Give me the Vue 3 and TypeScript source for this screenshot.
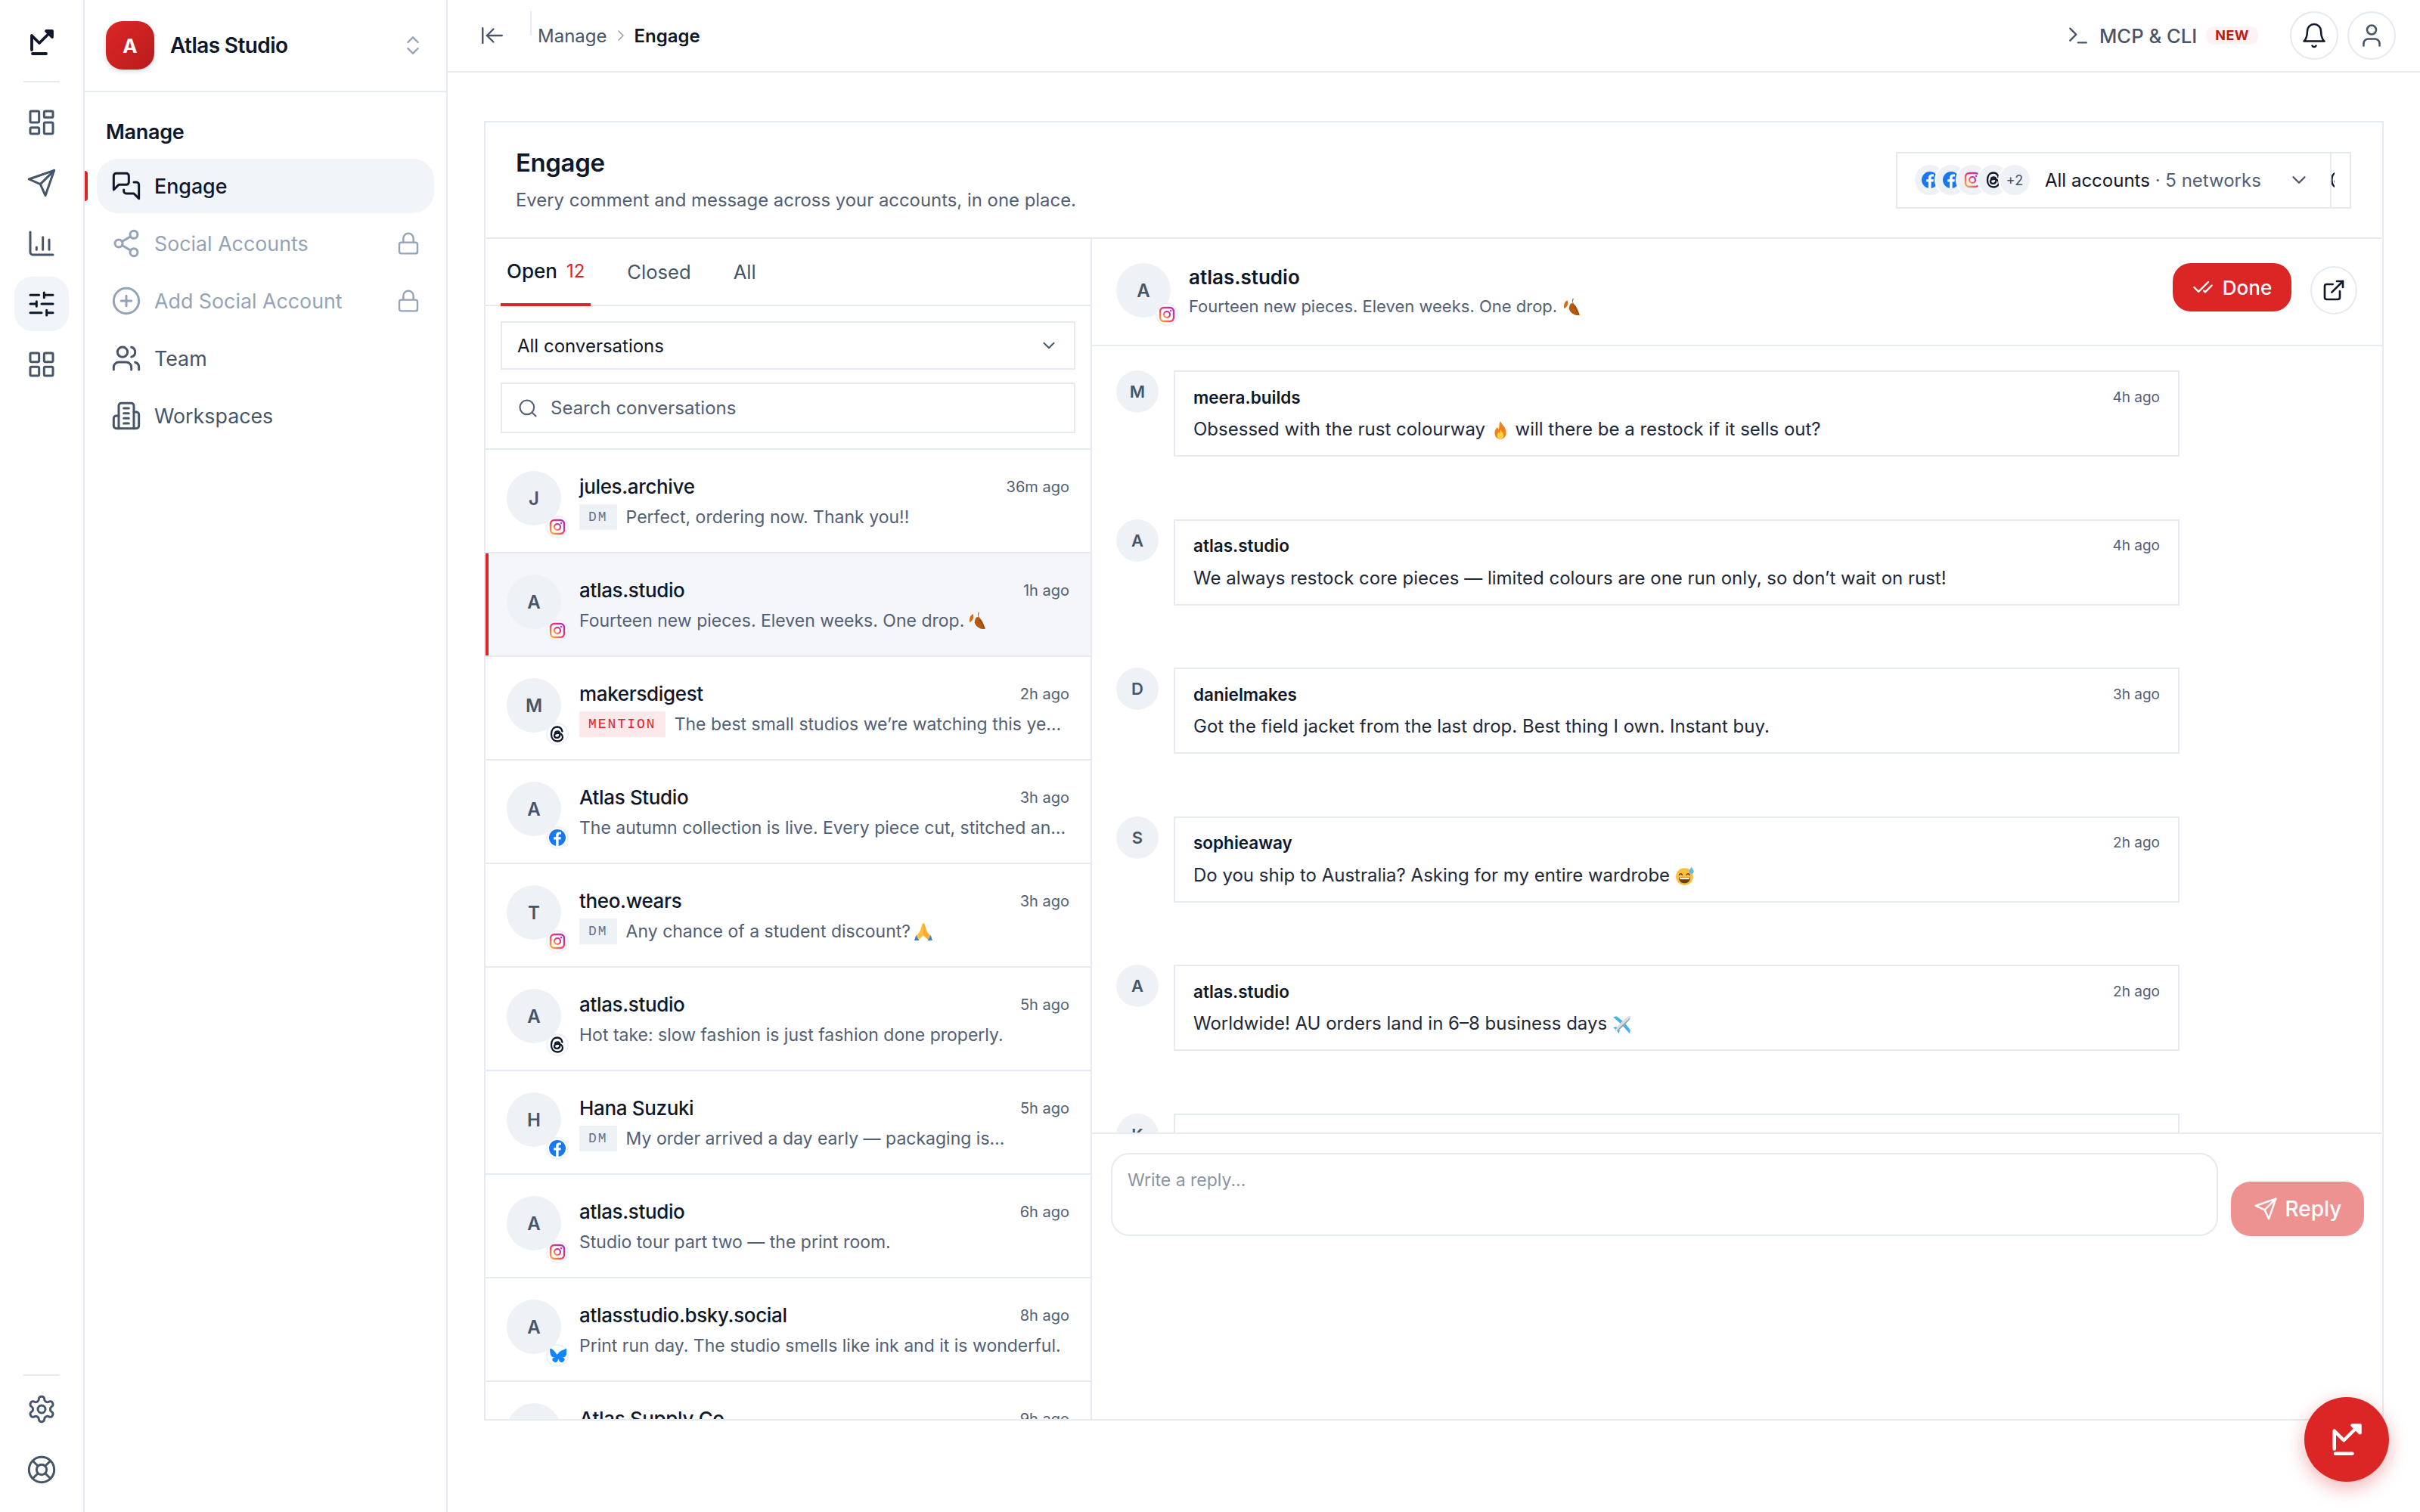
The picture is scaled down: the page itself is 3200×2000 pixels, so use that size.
<script setup lang="ts">
type Row = { initial: string; net: string; name: string; time: string; tag?: string; text: string; emoji?: string; active?: boolean }
type Msg = { initial: string; name: string; time: string; before: string; emoji?: string; after?: string }

const icons: Record<string, string> = {
  logo: '<path d="M7 11v19M7 11l10 10L32 6"/><path d="M26 5h8v8z" fill="currentColor"/><path d="M8 35h18"/>',
  dashboard: '<rect x="3" y="3" width="7" height="9" rx="1"/><rect x="14" y="3" width="7" height="5" rx="1"/><rect x="14" y="12" width="7" height="9" rx="1"/><rect x="3" y="16" width="7" height="5" rx="1"/>',
  send: '<path d="M22 2 11 13"/><path d="m22 2-7 20-4-9-9-4z"/>',
  chart: '<path d="M3 3v16a2 2 0 0 0 2 2h16"/><path d="M8 17v-2"/><path d="M13 17V7"/><path d="M18 17v-8"/>',
  sliders: '<path d="M21 5h-7M10 5H3M21 12h-9M8 12H3M21 19h-5M12 19H3M14 3v4M8 10v4M16 17v4"/>',
  grid: '<rect x="3" y="3" width="7" height="7" rx="1"/><rect x="14" y="3" width="7" height="7" rx="1"/><rect x="14" y="14" width="7" height="7" rx="1"/><rect x="3" y="14" width="7" height="7" rx="1"/>',
  gear: '<path d="M12.22 2h-.44a2 2 0 0 0-2 2v.18a2 2 0 0 1-1 1.73l-.43.25a2 2 0 0 1-2 0l-.15-.08a2 2 0 0 0-2.73.73l-.22.38a2 2 0 0 0 .73 2.73l.15.1a2 2 0 0 1 1 1.72v.51a2 2 0 0 1-1 1.74l-.15.09a2 2 0 0 0-.73 2.73l.22.38a2 2 0 0 0 2.73.73l.15-.08a2 2 0 0 1 2 0l.43.25a2 2 0 0 1 1 1.73V20a2 2 0 0 0 2 2h.44a2 2 0 0 0 2-2v-.18a2 2 0 0 1 1-1.73l.43-.25a2 2 0 0 1 2 0l.15.08a2 2 0 0 0 2.73-.73l.22-.39a2 2 0 0 0-.73-2.73l-.15-.08a2 2 0 0 1-1-1.74v-.5a2 2 0 0 1 1-1.74l.15-.09a2 2 0 0 0 .73-2.73l-.22-.38a2 2 0 0 0-2.73-.73l-.15.08a2 2 0 0 1-2 0l-.43-.25a2 2 0 0 1-1-1.73V4a2 2 0 0 0-2-2z"/><circle cx="12" cy="12" r="3"/>',
  help: '<circle cx="12" cy="12" r="10"/><circle cx="12" cy="12" r="4"/><path d="m4.93 4.93 4.24 4.24M14.83 9.17l4.24-4.24M14.83 14.83l4.24 4.24M9.17 14.83l-4.24 4.24"/>',
  updown: '<path d="m7 15 5 5 5-5"/><path d="m7 9 5-5 5 5"/>',
  messages: '<path d="M14 9a2 2 0 0 1-2 2H6l-4 4V4a2 2 0 0 1 2-2h8a2 2 0 0 1 2 2z"/><path d="M18 9h2a2 2 0 0 1 2 2v11l-4-4h-6a2 2 0 0 1-2-2v-1"/>',
  share: '<circle cx="18" cy="5" r="3"/><circle cx="6" cy="12" r="3"/><circle cx="18" cy="19" r="3"/><path d="m8.59 13.51 6.83 3.98M15.41 6.51l-6.82 3.98"/>',
  plus: '<circle cx="12" cy="12" r="10"/><path d="M8 12h8M12 8v8"/>',
  lock: '<rect x="3" y="11" width="18" height="11" rx="2"/><path d="M7 11V7a5 5 0 0 1 10 0v4"/>',
  users: '<path d="M16 21v-2a4 4 0 0 0-4-4H6a4 4 0 0 0-4 4v2"/><circle cx="9" cy="7" r="4"/><path d="M22 21v-2a4 4 0 0 0-3-3.87"/><path d="M16 3.13a4 4 0 0 1 0 7.75"/>',
  building: '<path d="M6 22V4a2 2 0 0 1 2-2h8a2 2 0 0 1 2 2v18Z"/><path d="M6 12H4a2 2 0 0 0-2 2v6a2 2 0 0 0 2 2h2"/><path d="M18 9h2a2 2 0 0 1 2 2v9a2 2 0 0 1-2 2h-2"/><path d="M10 6h4M10 10h4M10 14h4M10 18h4"/>',
  collapse: '<path d="M3 19V5"/><path d="m13 6-6 6 6 6"/><path d="M7 12h14"/>',
  right: '<path d="m9 18 6-6-6-6"/>',
  down: '<path d="m6 9 6 6 6-6"/>',
  terminal: '<path d="m4 17 6-6-6-6"/><path d="M12 19h8"/>',
  bell: '<path d="M6 8a6 6 0 0 1 12 0c0 7 3 9 3 9H3s3-2 3-9"/><path d="M10.3 21a1.94 1.94 0 0 0 3.4 0"/>',
  user: '<path d="M19 21v-2a4 4 0 0 0-4-4H9a4 4 0 0 0-4 4v2"/><circle cx="12" cy="7" r="4"/>',
  search: '<circle cx="11" cy="11" r="8"/><path d="m21 21-4.3-4.3"/>',
  checks: '<path d="M18 6 7 17l-5-5"/><path d="m22 10-7.5 7.5L13 16"/>',
  external: '<path d="M15 3h6v6"/><path d="M10 14 21 3"/><path d="M18 13v6a2 2 0 0 1-2 2H5a2 2 0 0 1-2-2V8a2 2 0 0 1 2-2h6"/>'
}

const socials: Record<string, string> = {
  instagram: '<defs><linearGradient id="ig" x1="0" y1="1" x2="1" y2="0"><stop offset="0" stop-color="#fdb03c"/><stop offset=".5" stop-color="#f0396b"/><stop offset="1" stop-color="#a62fc9"/></linearGradient></defs><rect x="3" y="3" width="18" height="18" rx="5" fill="none" stroke="url(#ig)" stroke-width="2.4"/><circle cx="12" cy="12" r="4" fill="none" stroke="url(#ig)" stroke-width="2.2"/><circle cx="17" cy="7" r="1.2" fill="#c936a8" stroke="none"/>',
  facebook: '<circle cx="12" cy="12" r="11" fill="#1877f2" stroke="none"/><path d="M13.6 23v-8.4h2.8l.5-3.3h-3.3V9.2c0-1 .4-1.7 1.8-1.7H17V4.6c-.5 0-1.5-.2-2.6-.2-2.6 0-4.3 1.6-4.3 4.4v2.5H7.2v3.3h2.900V23z" fill="#fff" stroke="none"/>',
  threads: '<path d="M18.5 8.5C17.7 4.8 15.3 2.500 12 2.500 7 2.500 4 6.300 4 12s3 9.500 8 9.500c4 0 7-2.400 7-5.600 0-3.200-2.800-5.100-6.500-5.100-2.700 0-4.500 1.300-4.500 3.200 0 1.800 1.500 2.900 3.500 2.900 2.500 0 3.900-1.700 3.900-4.600 0-2.400-1.300-3.900-3.400-3.900-1.300 0-2.300.5-3 1.500" fill="none" stroke="#0f172a" stroke-width="2.300"/>',
  bluesky: '<path d="M12 11c-1-2-3.800-5.700-6.400-7.500C3.100 1.700 2 2 2 4.600c0 1.400.8 5.800 1.300 6.900 1 2.700 3.900 3.300 6.400 2.900-4.400.7-5.500 3.100-3.100 5.600 4.600 4.700 6.600-1.200 7.100-2.700.1-.3.2-.4.3-.3 0-.1.1 0 .3.3.5 1.500 2.500 7.400 7.100 2.700 2.400-2.500 1.300-4.900-3.100-5.600 2.500.4 5.400-.2 6.400-2.900.5-1.100 1.300-5.500 1.300-6.900 0-2.600-1.100-2.900-3.600-1.100C15.800 5.300 13 9 12 11z" fill="#1185fe" stroke="none" transform="translate(.2 .6) scale(.95)"/>'
}

const emojis: Record<string, string> = {
  leaf: '<path d="M14 2c-1 2-1 4 0 6" stroke="#8a5a1f" stroke-width="1" fill="none"/><path d="M11 8c4-2 8 4 11 14-6 1-12-3-13-8 0-2 1-5 2-6z" fill="#b5590f"/><path d="M7 4C4 5 2 9 3 14c3-1 6-5 4-10z" fill="#c9741c"/><path d="M15 11c2 3 4 6 6 10" stroke="#7d3a08" stroke-width=".8" fill="none"/>',
  fire: '<path d="M12 1c1 4 7 7 7 14 0 5-3 8-7 8s-7-3-7-8c0-3 2-5 3-7 1 1 1 3 2 3 1-3 0-7 2-10z" fill="#f2811d"/><path d="M12 11c1 3 4 4 4 7.500 0 2.500-2 4.500-4 4.500s-4-2-4-4.500c0-2 1-3 2-4 .5.500 1 1 1 1 .5-1.500 0-3 1-4.500z" fill="#fdd23e"/>',
  pray: '<path d="M11.500 2c-1.500 1-2 5-3 8-1 3-3 5-5 7l3 5 5.500-5V2z" fill="#fbbf3c"/><path d="M12.500 2c1.500 1 2 5 3 8 1 3 3 5 5 7l-3 5-5.500-5V2z" fill="#f8ad2a"/><path d="M3 16.500 7 23H1zM21 16.500 17 23h6z" fill="#3b82c4"/>',
  sweat: '<circle cx="11.500" cy="12.500" r="10.500" fill="#fbbf3c"/><path d="M5 10.500c.7-2 3-2 3.700 0M14 10.500c.7-2 3-2 3.700 0" stroke="#5b3a14" stroke-width="1.300" fill="none"/><path d="M4.500 13.500h14c0 4.500-3 7-7 7s-7-2.500-7-7z" fill="#6a3d12"/><path d="M5.500 14h12v1.800h-12z" fill="#fff"/><path d="M20 1c1.300 2 2.800 3.500 2.800 5.200a2.800 2.800 0 0 1-5.600 0C17.200 4.500 18.700 3 20 1z" fill="#5fb8ea"/>',
  plane: '<path d="M1 3l4-1 9 7-3 3z" fill="#3db4ea"/><path d="M21 23l1-4-7-9-3 3z" fill="#3db4ea"/><path d="M1 16l3-1 4 1-3 3z" fill="#3db4ea"/><path d="M8 23l1-3-1-4-3 3z" fill="#3db4ea"/><path d="M20 2c2-1 3 0 2 2-1 3-8 10-13 14l-4 2-2 1 1-2 2-4C10 10 17 3 20 2z" fill="#d9dde3"/><path d="M22 4c-1 3-8 10-13 14l-4 2c5-5 12-12 17-16z" fill="#9aa2ad"/>'
}

const railTop = [
  { icon: 'dashboard' },
  { icon: 'send' },
  { icon: 'chart' },
  { icon: 'sliders', active: true },
  { icon: 'grid' }
]

const nav = [
  { label: 'Engage', icon: 'messages', active: true },
  { label: 'Social Accounts', icon: 'share', locked: true },
  { label: 'Add Social Account', icon: 'plus', locked: true },
  { label: 'Team', icon: 'users' },
  { label: 'Workspaces', icon: 'building' }
]

const rows: Row[] = [
  { initial: 'J', net: 'instagram', name: 'jules.archive', time: '36m ago', tag: 'DM', text: 'Perfect, ordering now. Thank you!!' },
  { initial: 'A', net: 'instagram', name: 'atlas.studio', time: '1h ago', text: 'Fourteen new pieces. Eleven weeks. One drop.', emoji: 'leaf', active: true },
  { initial: 'M', net: 'threads', name: 'makersdigest', time: '2h ago', tag: 'MENTION', text: 'The best small studios we’re watching this ye…' },
  { initial: 'A', net: 'facebook', name: 'Atlas Studio', time: '3h ago', text: 'The autumn collection is live. Every piece cut, stitched an…' },
  { initial: 'T', net: 'instagram', name: 'theo.wears', time: '3h ago', tag: 'DM', text: 'Any chance of a student discount?', emoji: 'pray' },
  { initial: 'A', net: 'threads', name: 'atlas.studio', time: '5h ago', text: 'Hot take: slow fashion is just fashion done properly.' },
  { initial: 'H', net: 'facebook', name: 'Hana Suzuki', time: '5h ago', tag: 'DM', text: 'My order arrived a day early — packaging is…' },
  { initial: 'A', net: 'instagram', name: 'atlas.studio', time: '6h ago', text: 'Studio tour part two — the print room.' },
  { initial: 'A', net: 'bluesky', name: 'atlasstudio.bsky.social', time: '8h ago', text: 'Print run day. The studio smells like ink and it is wonderful.' },
  { initial: 'A', net: 'facebook', name: 'Atlas Supply Co', time: '9h ago', text: '' }
]

const messages: Msg[] = [
  { initial: 'M', name: 'meera.builds', time: '4h ago', before: 'Obsessed with the rust colourway', emoji: 'fire', after: 'will there be a restock if it sells out?' },
  { initial: 'A', name: 'atlas.studio', time: '4h ago', before: 'We always restock core pieces — limited colours are one run only, so don’t wait on rust!' },
  { initial: 'D', name: 'danielmakes', time: '3h ago', before: 'Got the field jacket from the last drop. Best thing I own. Instant buy.' },
  { initial: 'S', name: 'sophieaway', time: '2h ago', before: 'Do you ship to Australia? Asking for my entire wardrobe', emoji: 'sweat' },
  { initial: 'A', name: 'atlas.studio', time: '2h ago', before: 'Worldwide! AU orders land in 6–8 business days', emoji: 'plane' },
  { initial: 'K', name: '', time: '', before: '' }
]

const stack = ['facebook', 'facebook', 'instagram', 'threads']
</script>

<template>
  <div class="app">
    <aside class="rail">
      <div class="rail-btn"><svg class="logo" viewBox="0 0 40 40" v-html="icons.logo" /></div>
      <div class="rail-sep" />
      <div class="rail-group">
        <div v-for="r in railTop" :key="r.icon" class="rail-btn" :class="{ on: r.active }">
          <svg class="ic40" viewBox="0 0 24 24" v-html="icons[r.icon]" />
        </div>
      </div>
      <div class="rail-bottom">
        <div class="rail-sep" />
        <div class="rail-btn"><svg class="ic40" viewBox="0 0 24 24" v-html="icons.gear" /></div>
        <div class="rail-btn"><svg class="ic40" viewBox="0 0 24 24" v-html="icons.help" /></div>
      </div>
    </aside>

    <aside class="side">
      <div class="side-head">
        <div class="tile">A</div>
        <span class="side-name">Atlas Studio</span>
        <svg class="updown" viewBox="0 0 24 24" v-html="icons.updown" />
      </div>
      <div class="side-label">Manage</div>
      <nav class="side-nav">
        <div v-for="n in nav" :key="n.label" class="nav-item" :class="{ on: n.active, off: n.locked }">
          <i v-if="n.active" class="nav-mark" />
          <svg class="ic40" viewBox="0 0 24 24" v-html="icons[n.icon]" />
          <span class="nav-text">{{ n.label }}</span>
          <svg v-if="n.locked" class="lock" viewBox="0 0 24 24" v-html="icons.lock" />
        </div>
      </nav>
    </aside>

    <main class="main">
      <header class="top">
        <svg class="collapse" viewBox="0 0 24 24" v-html="icons.collapse" />
        <i class="top-sep" />
        <span class="crumb">Manage</span>
        <svg class="crumb-arrow" viewBox="0 0 24 24" v-html="icons.right" />
        <span class="crumb now">Engage</span>
        <div class="top-right">
          <svg class="term" viewBox="0 0 24 24" v-html="icons.terminal" />
          <span class="mcp">MCP &amp; CLI</span>
          <span class="new">NEW</span>
          <div class="round first"><svg class="ic34 dark" viewBox="0 0 24 24" v-html="icons.bell" /></div>
          <div class="round"><svg class="ic34" viewBox="0 0 24 24" v-html="icons.user" /></div>
        </div>
      </header>

      <div class="content">
        <section class="card">
          <div class="card-head">
            <div>
              <h1>Engage</h1>
              <p>Every comment and message across your accounts, in one place.</p>
            </div>
            <div class="accounts">
              <div class="acc-main">
                <div class="stack">
                  <span v-for="(s, i) in stack" :key="i" class="dot">
                    <svg viewBox="0 0 24 24" v-html="socials[s]" />
                  </span>
                  <span class="dot more">+2</span>
                </div>
                <span class="acc-text">All accounts<em> · 5 networks</em></span>
                <svg class="acc-down" viewBox="0 0 24 24" v-html="icons.down" />
              </div>
              <div class="acc-rest"><svg viewBox="0 0 24 24" v-html="socials.threads" /></div>
            </div>
          </div>

          <div class="card-body">
            <div class="list">
              <div class="tabs">
                <div class="tab on">Open <b>12</b></div>
                <div class="tab">Closed</div>
                <div class="tab">All</div>
              </div>
              <div class="filters">
                <div class="field select">
                  <span>All conversations</span>
                  <svg class="sel-down" viewBox="0 0 24 24" v-html="icons.down" />
                </div>
                <div class="field search">
                  <svg class="sel-search" viewBox="0 0 24 24" v-html="icons.search" />
                  <span>Search conversations</span>
                </div>
              </div>
              <div class="rows">
                <div v-for="(r, i) in rows" :key="i" class="row" :class="{ on: r.active }">
                  <div class="avatar">
                    {{ r.initial }}
                    <span class="badge"><svg viewBox="0 0 24 24" v-html="socials[r.net]" /></span>
                  </div>
                  <div class="row-body">
                    <div class="row-top">
                      <span class="row-name">{{ r.name }}</span>
                      <span class="row-time">{{ r.time }}</span>
                    </div>
                    <div class="row-text">
                      <span v-if="r.tag" class="tag" :class="{ hot: r.tag === 'MENTION' }">{{ r.tag }}</span>
                      <span>{{ r.text }}</span>
                      <svg v-if="r.emoji" class="emo" viewBox="0 0 24 24" v-html="emojis[r.emoji]" />
                    </div>
                  </div>
                </div>
              </div>
            </div>

            <div class="detail">
              <div class="detail-head">
                <div class="avatar">
                  A
                  <span class="badge"><svg viewBox="0 0 24 24" v-html="socials.instagram" /></span>
                </div>
                <div class="detail-who">
                  <div class="detail-name">atlas.studio</div>
                  <div class="detail-sub">
                    Fourteen new pieces. Eleven weeks. One drop.
                    <svg class="emo" viewBox="0 0 24 24" v-html="emojis.leaf" />
                  </div>
                </div>
                <div class="done"><svg class="ic28" viewBox="0 0 24 24" v-html="icons.checks" />Done</div>
                <div class="round ext"><svg class="ic30 dark" viewBox="0 0 24 24" v-html="icons.external" /></div>
              </div>

              <div class="thread">
                <div v-for="(m, i) in messages" :key="i" class="msg">
                  <div class="msg-av">{{ m.initial }}</div>
                  <div class="bubble">
                    <div class="msg-top">
                      <span class="msg-name">{{ m.name }}</span>
                      <span class="msg-time">{{ m.time }}</span>
                    </div>
                    <div class="msg-text">
                      {{ m.before }}
                      <svg v-if="m.emoji" class="emo" viewBox="0 0 24 24" v-html="emojis[m.emoji]" />
                      {{ m.after }}
                    </div>
                  </div>
                </div>
              </div>

              <div class="composer">
                <div class="input">Write a reply...</div>
                <div class="reply"><svg class="ic32" viewBox="0 0 24 24" v-html="icons.send" />Reply</div>
              </div>
            </div>
          </div>
        </section>
      </div>
    </main>

    <div class="fab"><svg class="fab-logo" viewBox="0 0 40 40" v-html="icons.logo" /></div>
  </div>
</template>

<style>
html, body {
  margin: 0;
  background: #fff;
}
</style>

<style scoped>
.app {
  display: flex;
  width: 3200px;
  height: 2000px;
  overflow: hidden;
  background: #fff;
  color: #0f172a;
  font-family: Inter, "Noto Sans", sans-serif;
}
svg {
  fill: none;
  stroke: currentColor;
  stroke-linecap: round;
  stroke-linejoin: round;
  flex: none;
}
.ic40 { width: 40px; height: 40px; stroke-width: 1.8; }
.ic34 { width: 36px; height: 36px; stroke-width: 1.7; color: #475569; }
.ic32 { width: 32px; height: 32px; stroke-width: 1.8; }
.ic30 { width: 32px; height: 32px; stroke-width: 2; }
.ic28 { width: 28px; height: 28px; stroke-width: 2; }
.dark { color: #0f172a; }

.rail {
  width: 112px;
  box-sizing: border-box;
  flex: none;
  border-right: 2px solid #e6eaf1;
  padding: 20px 0 20px;
  display: flex;
  flex-direction: column;
  align-items: center;
}
.rail-btn {
  width: 72px;
  height: 72px;
  border-radius: 24px;
  display: flex;
  align-items: center;
  justify-content: center;
  color: #475569;
}
.rail-btn.on {
  background: #f1f4f9;
  color: #0f172a;
}
.logo {
  width: 40px;
  height: 40px;
  stroke-width: 3.8;
  color: #0f172a;
}
.rail-sep {
  width: 48px;
  height: 2px;
  background: #e6eaf1;
  margin: 15px 0 17px;
}
.rail-group {
  display: flex;
  flex-direction: column;
  gap: 8px;
}
.rail-bottom {
  margin-top: auto;
  display: flex;
  flex-direction: column;
  align-items: center;
  gap: 8px;
}
.rail-bottom .rail-sep {
  margin: 0;
}

.side {
  width: 480px;
  box-sizing: border-box;
  flex: none;
  border-right: 2px solid #e6eaf1;
}
.side-head {
  height: 122px;
  box-sizing: border-box;
  border-bottom: 2px solid #e6eaf1;
  display: flex;
  align-items: center;
  padding: 0 28px;
}
.tile {
  width: 64px;
  height: 64px;
  border-radius: 22px;
  background: linear-gradient(135deg, #dc2626, #b91c1c);
  box-shadow: 0 2px 6px rgba(15, 23, 42, 0.18);
  color: #fff;
  font-size: 26px;
  font-weight: 700;
  display: flex;
  align-items: center;
  justify-content: center;
}
.side-name {
  margin-left: 21px;
  font-size: 28px;
  font-weight: 600;
  letter-spacing: -0.6px;
}
.updown {
  margin-left: auto;
  width: 32px;
  height: 32px;
  stroke-width: 1.8;
  color: #94a3b8;
}
.side-label {
  margin: 33px 0 15px 28px;
  font-size: 27px;
  line-height: 40px;
  font-weight: 600;
  letter-spacing: -0.3px;
}
.side-nav {
  display: flex;
  flex-direction: column;
  gap: 4px;
  padding: 0 16px;
}
.nav-item {
  position: relative;
  height: 72px;
  border-radius: 28px;
  display: flex;
  align-items: center;
  gap: 17px;
  padding: 0 18px 0 19px;
  color: #475569;
}
.nav-item.on {
  background: #f1f4f9;
  color: #0f172a;
}
.nav-item.off {
  color: #94a3b8;
}
.nav-text {
  font-size: 26.8px;
  font-weight: 400;
}
.nav-item.on .nav-text {
  font-weight: 500;
}
.nav-mark {
  position: absolute;
  left: -16px;
  top: 16px;
  width: 4px;
  height: 40px;
  background: #dc2626;
  border-radius: 0 4px 4px 0;
}
.lock {
  margin-left: auto;
  width: 32px;
  height: 32px;
  stroke-width: 1.8;
}

.main {
  flex: 1;
  min-width: 0;
  display: flex;
  flex-direction: column;
}
.top {
  height: 96px;
  box-sizing: border-box;
  flex: none;
  border-bottom: 2px solid #e6eaf1;
  display: flex;
  align-items: center;
  padding: 0 32px 0 42px;
}
.collapse {
  width: 34px;
  height: 34px;
  stroke-width: 1.7;
  color: #475569;
}
.top-sep {
  width: 2px;
  height: 32px;
  background: #e6eaf1;
  margin: 15px 8px 0 33px;
  align-self: flex-start;
}
.crumb {
  font-size: 24px;
  color: #475569;
}
.crumb.now {
  color: #0f172a;
  font-weight: 600;
}
.crumb-arrow {
  width: 24px;
  height: 24px;
  margin: 0 6px;
  stroke-width: 1.6;
  color: #94a3b8;
}
.top-right {
  margin-left: auto;
  display: flex;
  align-items: center;
  gap: 12px;
}
.term {
  width: 32px;
  height: 32px;
  stroke-width: 1.8;
  color: #475569;
  margin-right: 0;
}
.mcp {
  font-size: 25.6px;
  font-weight: 500;
  color: #475569;
}
.new {
  font-size: 18px;
  line-height: 24px;
  font-weight: 700;
  color: #b91c1c;
  background: #fef2f2;
  border-radius: 10px;
  padding: 0 12px;
  letter-spacing: 0.5px;
}
.round {
  width: 64px;
  height: 64px;
  box-sizing: border-box;
  border: 2px solid #e6eaf1;
  border-radius: 50%;
  display: flex;
  align-items: center;
  justify-content: center;
}
.round.first {
  margin-left: 30px;
}

.content {
  flex: 1;
  min-height: 0;
  padding: 64px 48px 121px;
  display: flex;
}
.card {
  flex: 1;
  min-width: 0;
  border: 2px solid #e6eaf1;
  display: flex;
  flex-direction: column;
  overflow: hidden;
}
.card-head {
  height: 154px;
  box-sizing: border-box;
  flex: none;
  border-bottom: 2px solid #e6eaf1;
  padding: 0 41px 0 40px;
  display: flex;
  align-items: center;
  justify-content: space-between;
}
h1 {
  margin: 0;
  font-size: 33px;
  line-height: 44px;
  font-weight: 600;
  letter-spacing: -0.4px;
}
.card-head p {
  margin: 10px 0 0;
  font-size: 23.9px;
  line-height: 36px;
  color: #526075;
}
.accounts {
  width: 602px;
  height: 75px;
  box-sizing: border-box;
  border: 2px solid #e6eaf1;
  display: flex;
}
.acc-main {
  width: 574px;
  box-sizing: border-box;
  border-right: 2px solid #e6eaf1;
  display: flex;
  align-items: center;
  padding-left: 23px;
}
.acc-rest {
  width: 4px;
  overflow: hidden;
  display: flex;
  align-items: center;
}
.acc-rest svg {
  width: 26px;
  height: 26px;
  margin-left: -4px;
}
.stack {
  display: flex;
}
.dot {
  width: 40px;
  height: 40px;
  border-radius: 50%;
  background: #eef1f6;
  box-shadow: 0 0 0 2px #fff;
  margin-right: -12px;
  display: flex;
  align-items: center;
  justify-content: center;
  position: relative;
}
.dot svg {
  width: 24px;
  height: 24px;
}
.dot.more {
  margin-right: 0;
  font-size: 18px;
  color: #475569;
}
.acc-text {
  margin-left: 20px;
  font-size: 24px;
  white-space: nowrap;
}
.acc-text em {
  font-style: normal;
  color: #526075;
}
.acc-down {
  margin-left: auto;
  margin-right: 26px;
  width: 30px;
  height: 30px;
  stroke-width: 1.8;
  color: #475569;
}
.card-body {
  flex: 1;
  min-height: 0;
  display: flex;
}

.list {
  width: 802px;
  box-sizing: border-box;
  flex: none;
  border-right: 2px solid #e6eaf1;
  overflow: hidden;
}
.tabs {
  height: 89px;
  box-sizing: border-box;
  border-bottom: 2px solid #e6eaf1;
  padding: 0 20px;
  display: flex;
  gap: 40px;
}
.tab {
  height: 89px;
  box-sizing: border-box;
  padding: 0 8px 3px;
  display: flex;
  align-items: center;
  gap: 12px;
  font-size: 25.6px;
  color: #475569;
}
.tab.on {
  color: #0f172a;
  font-weight: 500;
  border-bottom: 4px solid #dc2626;
  padding-bottom: 0;
  font-size: 26px;
}
.tab b {
  font-size: 24px;
  font-weight: 400;
  color: #dc2626;
}
.filters {
  padding: 20px;
  display: flex;
  flex-direction: column;
  gap: 17px;
  border-bottom: 2px solid #e6eaf1;
}
.field {
  box-sizing: border-box;
  border: 2px solid #e6eaf1;
  display: flex;
  align-items: center;
  font-size: 24px;
}
.select {
  height: 64px;
  padding: 0 20px;
  justify-content: space-between;
}
.sel-down {
  width: 26px;
  height: 26px;
  stroke-width: 1.8;
  color: #475569;
}
.search {
  height: 67px;
  padding: 0 20px;
  gap: 16px;
  color: #526075;
}
.sel-search {
  width: 28px;
  height: 28px;
  stroke-width: 1.8;
}
.row {
  height: 137px;
  box-sizing: border-box;
  border-bottom: 2px solid #e6eaf1;
  padding: 28px 28px 0 28px;
  display: flex;
  gap: 24px;
}
.row.on {
  background: #f5f6f9;
  box-shadow: inset 4px 0 0 #dc2626;
}
.avatar {
  position: relative;
  width: 72px;
  height: 72px;
  flex: none;
  border-radius: 50%;
  background: #eef1f6;
  color: #475569;
  font-size: 24px;
  font-weight: 600;
  display: flex;
  align-items: center;
  justify-content: center;
}
.badge {
  position: absolute;
  right: -10px;
  bottom: -17px;
  width: 30px;
  height: 30px;
  box-sizing: border-box;
  border-radius: 50%;
  background: #fff;
  border: 2px solid #eef1f6;
  display: flex;
  align-items: center;
  justify-content: center;
}
.badge svg {
  width: 24px;
  height: 24px;
}
.row-body {
  flex: 1;
  min-width: 0;
}
.row-top {
  display: flex;
  justify-content: space-between;
  align-items: center;
  height: 40px;
}
.row-name {
  font-size: 26px;
  font-weight: 500;
  letter-spacing: -0.35px;
}
.row-time {
  font-size: 20px;
  padding-top: 2px;
  color: #526075;
}
.row-text {
  margin-top: 3px;
  height: 36px;
  display: flex;
  align-items: center;
  font-size: 23px;
  color: #526075;
  white-space: nowrap;
}
.tag {
  height: 34px;
  line-height: 34px;
  padding: 0 12px;
  margin-right: 12px;
  background: #eef1f6;
  color: #64748b;
  font-family: "Liberation Mono", monospace;
  font-size: 18px;
  letter-spacing: 2px;
}
.tag.hot {
  background: #fde8ea;
  color: #e11d2e;
}
.emo {
  width: 26px;
  height: 26px;
  stroke: none;
  margin-left: 4px;
  vertical-align: -6px;
}

.detail {
  flex: 1;
  min-width: 0;
  display: flex;
  flex-direction: column;
}
.detail-head {
  height: 142px;
  box-sizing: border-box;
  flex: none;
  border-bottom: 2px solid #e6eaf1;
  padding: 0 33px 4px 32px;
  display: flex;
  align-items: center;
}
.detail-head .badge {
  bottom: -11px;
}
.detail-who {
  margin-left: 24px;
  margin-top: 4px;
  flex: 1;
}
.detail-name {
  font-size: 26px;
  line-height: 36px;
  font-weight: 600;
}
.detail-sub {
  margin-top: 2px;
  font-size: 22px;
  line-height: 36px;
  color: #526075;
}
.detail-sub .emo,
.msg-text .emo {
  margin-left: 0;
}
.done {
  width: 157px;
  height: 64px;
  box-sizing: border-box;
  margin-bottom: 8px;
  border-radius: 24px;
  background: #dc2626;
  color: #fff;
  font-size: 26px;
  font-weight: 500;
  display: flex;
  align-items: center;
  justify-content: center;
  gap: 12px;
}
.ext {
  width: 62px;
  margin-left: 25px;
  border-radius: 50%;
}
.thread {
  flex: 1;
  min-height: 0;
  overflow: hidden;
  padding: 32px 32px 0;
  display: flex;
  flex-direction: column;
  gap: 82.5px;
}
.msg {
  display: flex;
  gap: 20px;
  flex: none;
}
.msg-av {
  width: 56px;
  height: 56px;
  flex: none;
  border-radius: 50%;
  background: #eef1f6;
  color: #475569;
  font-size: 22px;
  font-weight: 600;
  display: flex;
  align-items: center;
  justify-content: center;
}
.bubble {
  width: 1330px;
  height: 114px;
  box-sizing: border-box;
  border: 2px solid #e6eaf1;
  padding: 17px 24px 0;
}
.msg-top {
  height: 32px;
  display: flex;
  justify-content: space-between;
  align-items: center;
}
.msg-name {
  font-size: 22.5px;
  font-weight: 600;
}
.msg-time {
  font-size: 19px;
  color: #526075;
}
.msg-text {
  margin-top: 9px;
  font-size: 24px;
  line-height: 36px;
  color: #1e293b;
}
.composer {
  height: 379px;
  box-sizing: border-box;
  flex: none;
  border-top: 2px solid #e6eaf1;
  padding: 25px 24px 0 25px;
  display: flex;
  align-items: flex-start;
  gap: 17px;
}
.input {
  flex: 1;
  height: 110px;
  box-sizing: border-box;
  border: 2px solid #e6eaf1;
  border-radius: 24px;
  padding: 18px 20px;
  font-size: 23px;
  line-height: 32px;
  color: #8a94a3;
}
.reply {
  width: 176px;
  height: 72px;
  margin-top: 38px;
  border-radius: 26px;
  background: #ee9291;
  color: #fff;
  font-size: 28px;
  font-weight: 500;
  display: flex;
  align-items: center;
  justify-content: center;
  gap: 10px;
}
.fab {
  position: fixed;
  right: 41px;
  bottom: 40px;
  width: 112px;
  height: 112px;
  border-radius: 50%;
  background: #dc2626;
  box-shadow: 0 8px 24px rgba(220, 38, 38, 0.35);
  display: flex;
  align-items: center;
  justify-content: center;
}
.fab-logo {
  width: 50px;
  height: 50px;
  stroke-width: 3.6;
  color: #fff;
}
</style>
